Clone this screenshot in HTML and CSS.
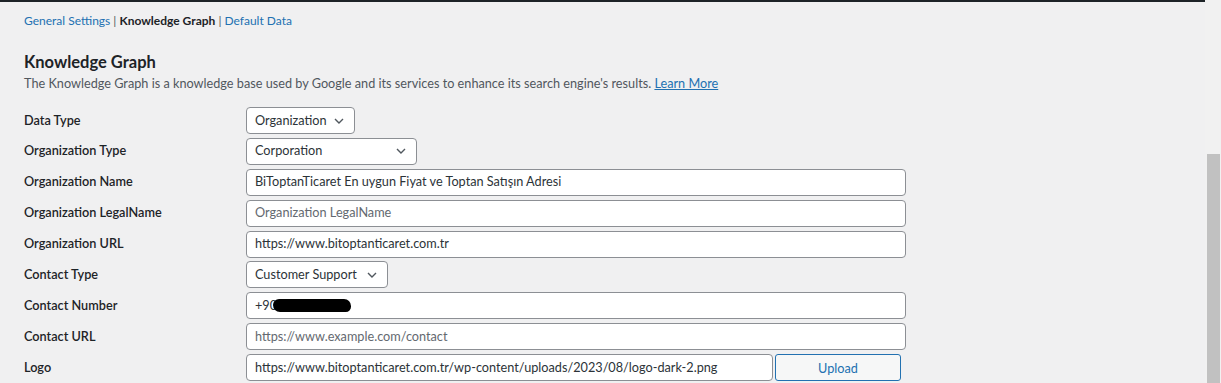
FILE: index.html
```html
<!DOCTYPE html>
<html lang="en">
<head>
  <meta charset="UTF-8" />
  <title>Knowledge Graph</title>
  <link rel="stylesheet" href="styles.css">
</head>
<body>
  <div class="screen">
    <div class="page">
      <div class="top-bar"></div>
      <main class="wrap">
        <nav class="subsubsub">
          <a href="#" class="sub-link">General Settings</a> |
          <span class="sub-current">Knowledge Graph</span> |
          <a href="#" class="sub-link">Default Data</a>
        </nav>

        <h2 class="section-title">Knowledge Graph</h2>
        <p class="section-desc">The Knowledge Graph is a knowledge base used by Google and its services to enhance its search engine's results. <a href="#" class="learn-more">Learn More</a></p>

        <div class="form-table">
          <div class="form-row">
            <label class="row-label">Data Type</label>
            <div class="select-box w-data">
              <span>Organization</span>
              <svg class="chev" width="10" height="6" viewBox="0 0 10 6"><path d="M1 1l4 4 4-4" fill="none" stroke="#50575e" stroke-width="1.4"/></svg>
            </div>
          </div>
          <div class="form-row">
            <label class="row-label">Organization Type</label>
            <div class="select-box w-org">
              <span>Corporation</span>
              <svg class="chev" width="10" height="6" viewBox="0 0 10 6"><path d="M1 1l4 4 4-4" fill="none" stroke="#50575e" stroke-width="1.4"/></svg>
            </div>
          </div>
          <div class="form-row">
            <label class="row-label">Organization Name</label>
            <div class="text-input">BiToptanTicaret En uygun Fiyat ve Toptan Satışın Adresi</div>
          </div>
          <div class="form-row">
            <label class="row-label">Organization LegalName</label>
            <div class="text-input placeholder">Organization LegalName</div>
          </div>
          <div class="form-row">
            <label class="row-label">Organization URL</label>
            <div class="text-input">https://www.bitoptanticaret.com.tr</div>
          </div>
          <div class="form-row">
            <label class="row-label">Contact Type</label>
            <div class="select-box w-contact">
              <span>Customer Support</span>
              <svg class="chev" width="10" height="6" viewBox="0 0 10 6"><path d="M1 1l4 4 4-4" fill="none" stroke="#50575e" stroke-width="1.4"/></svg>
            </div>
          </div>
          <div class="form-row">
            <label class="row-label">Contact Number</label>
            <div class="text-input"><span class="phone">+90<span class="redact"></span></span></div>
          </div>
          <div class="form-row">
            <label class="row-label">Contact URL</label>
            <div class="text-input placeholder">https://www.example.com/contact</div>
          </div>
          <div class="form-row">
            <label class="row-label">Logo</label>
            <div class="text-input w-logo">https://www.bitoptanticaret.com.tr/wp-content/uploads/2023/08/logo-dark-2.png</div>
            <button class="upload-btn">Upload</button>
          </div>
        </div>
      </main>
    </div>
    <div class="scrollbar"><div class="thumb"></div></div>
  </div>
</body>
</html>
```

FILE: styles.css
```css
:root {
  --wp-bg: #f0f0f1;
  --wp-dark: #1d2327;
  --wp-text: #2c3338;
  --wp-muted: #50575e;
  --wp-blue: #2271b1;
  --wp-border: #8c8f94;
}
* { box-sizing: border-box; margin: 0; padding: 0; }
html, body { height: 100%; overflow: hidden; }
body {
  background: var(--wp-bg); color: var(--wp-dark);
  font-family: 'Lato', 'Noto Sans', sans-serif;
  font-size: 12.7px; line-height: 1.4;
}
.screen {
  display: flex; height: 100%;
}
.page {
  flex: 1; min-width: 0;
}
.top-bar {
  height: 2px; background: var(--wp-dark);
}
.wrap {
  padding: 10px 24px 0;
}
.subsubsub {
  font-size: 12px; color: var(--wp-muted); line-height: 18px;
}
.sub-link {
  color: var(--wp-blue); text-decoration: none;
}
.sub-current {
  color: var(--wp-dark); font-weight: 700;
}
.section-title {
  font-size: 16.5px; font-weight: 700; color: var(--wp-dark);
  margin-top: 22px; line-height: 20px;
}
.section-desc {
  color: var(--wp-muted); margin-top: 1px; line-height: 20px;
}
.learn-more {
  color: var(--wp-blue);
}
.form-table {
  margin-top: 14px; display: flex; flex-direction: column; gap: 3.875px;
}
.form-row {
  display: flex; align-items: center; height: 27px;
}
.row-label {
  width: 222px; flex: none; color: var(--wp-dark); font-weight: 600;
}
.text-input, .select-box {
  height: 27px; background: #fff; border: 1px solid var(--wp-border);
  border-radius: 4px; padding: 0 8px; color: var(--wp-text);
  display: flex; align-items: center; white-space: nowrap; overflow: hidden;
}
.text-input { width: 660px; }
.text-input.placeholder { color: #646970; }
.select-box { justify-content: space-between; padding-right: 10px; }
.w-data { width: 109px; }
.w-org { width: 171px; }
.w-contact { width: 142px; }
.w-logo { width: 527px; }
.chev { flex: none; }
.phone { position: relative; }
.redact {
  position: absolute; left: 18px; top: 2px;
  width: 78px; height: 13px; background: #000;
  border-radius: 7px 8px 6px 8px;
}
.upload-btn {
  margin-left: 2px; width: 126px; height: 27px;
  background: #f6f7f7; border: 1px solid var(--wp-blue);
  border-radius: 3px; color: var(--wp-blue);
  font-family: inherit; font-size: 12.7px;
}
.scrollbar {
  width: 16px; flex: none; background: #f1f1f1;
  display: flex; flex-direction: column; justify-content: flex-end;
  padding: 0 1px 0 2px;
}
.thumb {
  height: 229px; background: #c1c1c1;
}
```
